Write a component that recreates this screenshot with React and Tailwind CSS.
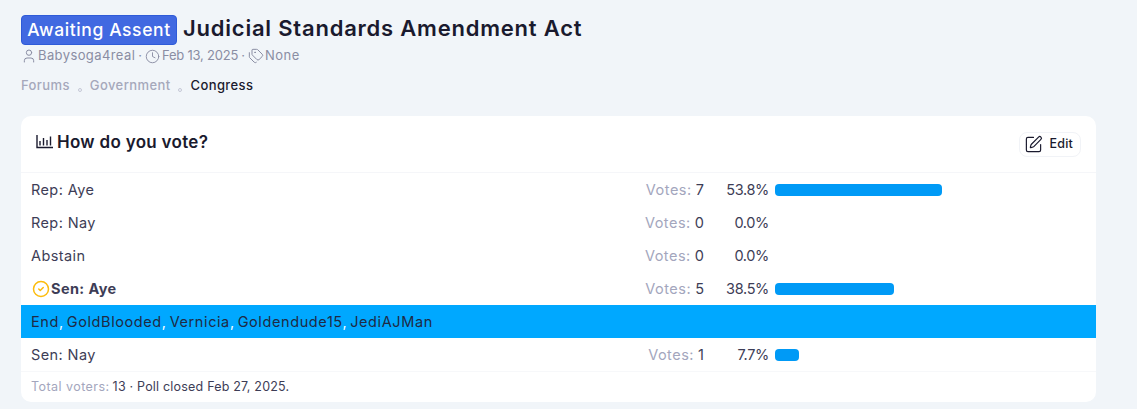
import React from "react";
import { User, Clock, Tags, SquarePen, CircleCheck } from "lucide-react";

const rows = [
  { label: "Rep: Aye", votes: 7, pct: "53.8%", bar: "w-[167px]" },
  { label: "Rep: Nay", votes: 0, pct: "0.0%" },
  { label: "Abstain", votes: 0, pct: "0.0%" },
  { label: "Sen: Aye", votes: 5, pct: "38.5%", bar: "w-[119px]", mine: true },
];

const voters = ["End", "GoldBlooded", "Vernicia", "Goldendude15", "JediAJMan"];

const Row = ({ label, votes, pct, bar, mine }) => (
  <div className="flex h-[33px] items-center pl-[10px] pr-[10px] text-[14.5px] text-[#3d3d56]">
    <div className={`flex flex-1 items-center gap-[1px] tracking-[0.4px] ${mine ? "font-bold" : ""}`}>
      {mine && (
        <CircleCheck size={18} strokeWidth={2} className="ml-[1px] text-[#fcbc0d]" />
      )}
      {label}
    </div>
    <div className="w-[120px] text-right">
      <span className="tracking-[0.5px] text-[#a3a6bd]">Votes:</span> <span>{votes}</span>
    </div>
    <div className="w-[65px] text-right tracking-[-0.35px]">{pct}</div>
    <div className="ml-[6px] w-[311px]">
      {bar && <div className={`h-[12px] rounded-[4px] bg-[#009af6] ${bar}`} />}
    </div>
  </div>
);

const Crumb = ({ children }) => <span className="text-[#a5a8bb]">{children}</span>;
const Dot = () => (
  <span className="mx-[8px] mt-[7px] h-[4px] w-[4px] rounded-full border border-[#c5c8d6]" />
);

const App = () => {
  return (
    <div
      className="h-[409px] overflow-hidden bg-[#f1f5f9] pl-[21px] pr-[41px] pt-[13px] text-[#1e1e2f]"
      style={{ fontFamily: "Inter, 'Noto Sans', sans-serif" }}
    >
      {/* Title */}
      <div className="flex h-[30px] items-start gap-[6px]">
        <span className="mt-[2px] flex h-[30px] w-[156px] items-center justify-center rounded-[4px] border border-[#2f5bd8] bg-[#4169e1] text-[17.5px] font-medium tracking-[0.6px] text-white">
          Awaiting Assent
        </span>
        <h1 className="text-[22px] font-semibold leading-[30px] tracking-[0.78px] text-[#1a1a2e]">
          Judicial Standards Amendment Act
        </h1>
      </div>

      {/* Meta */}
      <div className="mt-[3px] flex h-[20px] items-center text-[13px] text-[#8a8da3]">
        <User size={16} strokeWidth={1.5} />
        <span className="ml-[1px] tracking-[0.4px]">Babysoga4real</span>
        <span className="mx-[3px]">·</span>
        <Clock size={15} strokeWidth={1.5} />
        <span className="ml-[2px] tracking-[-0.2px]">Feb 13, 2025</span>
        <span className="mx-[3px]">·</span>
        <Tags size={16} strokeWidth={1.5} />
        <span className="ml-[1px] tracking-[0.5px]">None</span>
      </div>

      {/* Breadcrumb */}
      <div className="mt-[10px] flex h-[20px] items-center text-[13px] font-medium tracking-[0.4px]">
        <Crumb>Forums</Crumb>
        <Dot />
        <Crumb>Government</Crumb>
        <Dot />
        <span className="text-[#1a1a2e]">Congress</span>
      </div>

      {/* Poll card */}
      <div className="mt-[20px] w-[1075px] overflow-hidden rounded-[10px] bg-white">
        <div className="flex h-[57px] items-center justify-between border-b border-[#f5f6f9] pl-[15px] pr-[15px]">
          <div className="mb-[3px] flex items-center gap-[4px] text-[17px] font-semibold tracking-[0.3px] text-[#1a1a2e]">
            <svg width="17" height="17" viewBox="0 0 17 17" fill="none" stroke="currentColor" strokeWidth="1.4" className="mb-[2px]">
              <path d="M1 2v12.5h16M4 8v4.5M7.5 5v7.5M11 7v5.5M14.5 3.5v9" />
            </svg>
            How do you vote?
          </div>
          <button className="flex h-[25px] items-center gap-[7px] rounded-[8px] border border-[#f1f3f7] pl-[4px] pr-[7px] text-[12.5px] font-medium tracking-[0.2px] text-[#1a1a2e]">
            <SquarePen size={19} strokeWidth={1.5} />
            Edit
          </button>
        </div>

        {rows.map((r) => (
          <Row key={r.label} {...r} />
        ))}

        {/* Voter list */}
        <div className="flex h-[33px] items-center bg-[#00a8ff] pl-[10px] text-[14.5px] tracking-[0.6px] text-[#1f2a44]">
          {voters.map((v, i) => (
            <span key={v}>
              {v}
              {i < voters.length - 1 && <span className="mr-[3px] text-white">,</span>}
            </span>
          ))}
        </div>

        <Row label="Sen: Nay" votes={1} pct="7.7%" bar="w-[24px]" />

        <div className="flex h-[31px] items-center border-t border-[#f7f8fa] pl-[10px] text-[12.5px] tracking-[0.2px] text-[#3d3d56]">
          <span className="tracking-[0.45px] text-[#a3a6bd]">Total voters:</span>
          <span className="ml-[3px]">13 · Poll closed Feb 27, 2025.</span>
        </div>
      </div>
    </div>
  );
};

export default App;
